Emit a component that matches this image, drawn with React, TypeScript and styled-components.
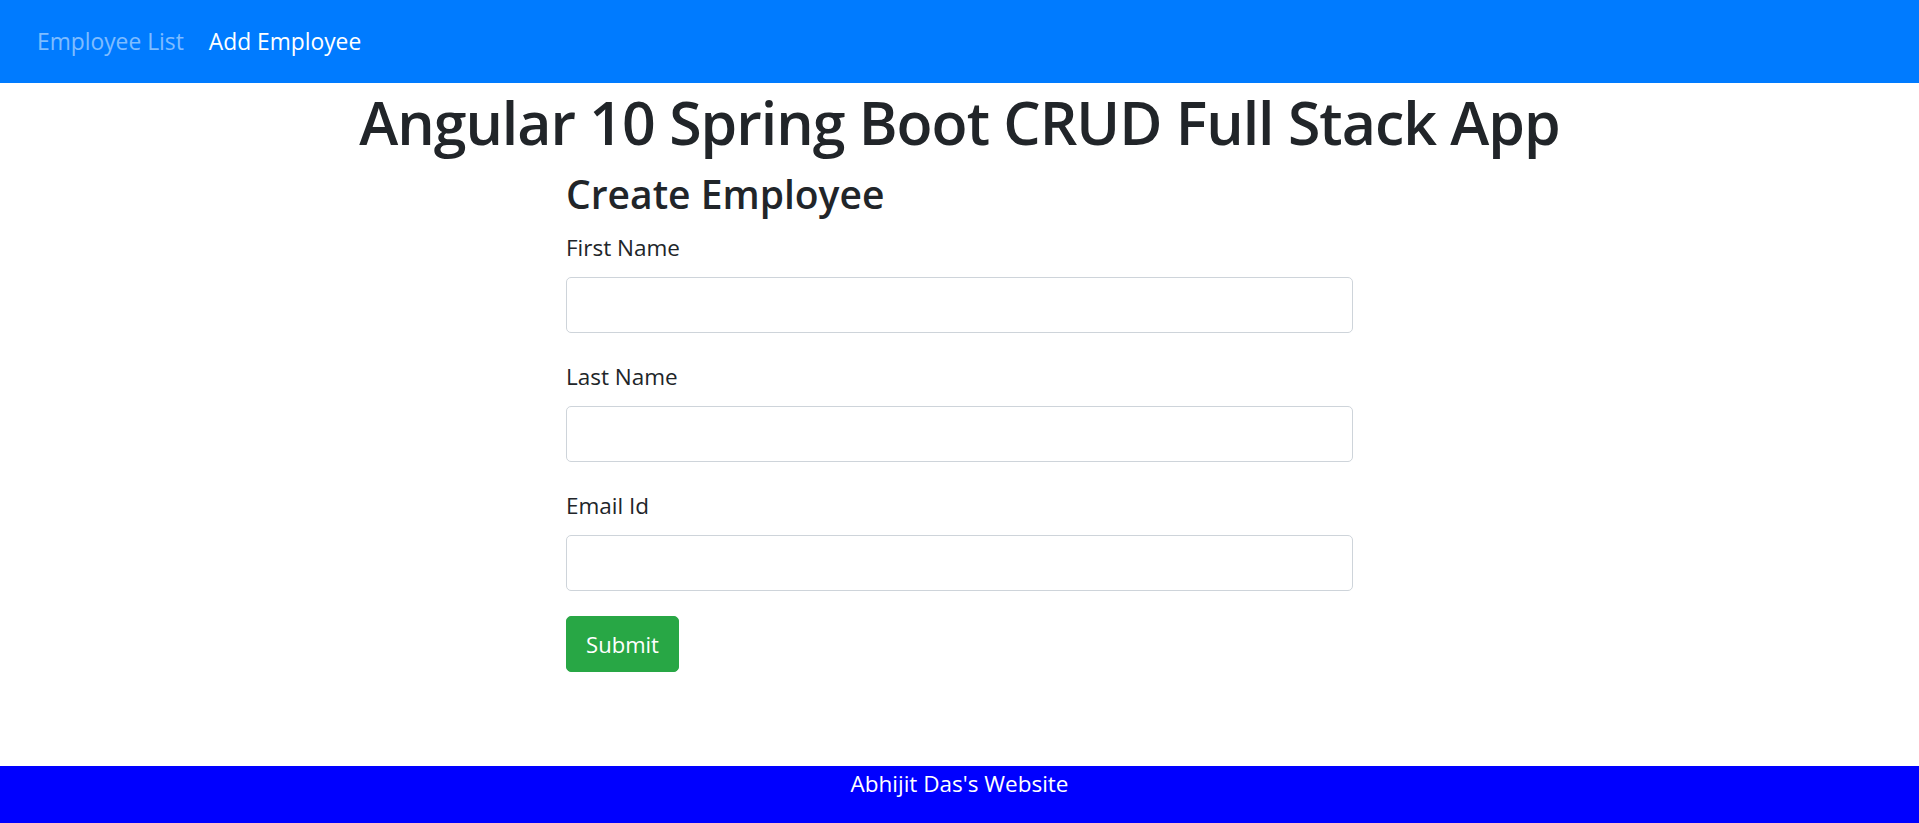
import React from "react";
import styled, { createGlobalStyle } from "styled-components";

const GlobalStyle = createGlobalStyle`
  html, body {
    margin: 0;
    padding: 0;
    background: #ffffff;
  }
  body {
    font-family: "Open Sans", "Noto Sans", "Liberation Sans", sans-serif;
    color: #212529;
  }
  * { box-sizing: border-box; }
`;

const Page = styled.div`
  min-height: 100vh;
  display: flex;
  flex-direction: column;
`;

const NavBar = styled.nav`
  height: 83px;
  background: #007bff;
  display: flex;
  align-items: center;
  padding-left: 37px;
  gap: 25px;
`;

const NavLink = styled.a<{ $active?: boolean }>`
  font-size: 22.8px;
  line-height: 34px;
  padding-top: 1px;
  text-decoration: none;
  color: ${(p) => (p.$active ? "#ffffff" : "rgba(255,255,255,0.5)")};
  cursor: pointer;
`;

const Title = styled.h1`
  margin: 1px 0 0;
  font-size: 59px;
  line-height: 76px;
  font-weight: 600;
  letter-spacing: -1px;
  text-align: center;
  color: #212529;
`;

const Main = styled.main`
  width: 787px;
  margin: 0 auto;
  display: flex;
  flex-direction: column;
`;

const SubTitle = styled.h2`
  margin: 10px 0 0;
  font-size: 39px;
  line-height: 47px;
  font-weight: 600;
  color: #212529;
`;

const Form = styled.form`
  display: flex;
  flex-direction: column;
  margin-top: 14px;
`;

const Group = styled.div`
  display: flex;
  flex-direction: column;
  gap: 12px;
  margin-bottom: 27px;
`;

const Label = styled.label`
  font-size: 22.5px;
  line-height: 34px;
  color: #212529;
`;

const Input = styled.input`
  height: 56px;
  width: 100%;
  border: 1px solid #ced4da;
  border-radius: 5px;
  background: #fff;
  font-size: 22px;
  padding: 0 15px;
  font-family: inherit;
  outline: none;
`;

const SubmitButton = styled.button`
  align-self: flex-start;
  margin-top: -2px;
  width: 113px;
  height: 56px;
  background: #28a745;
  border: 1px solid #28a745;
  border-radius: 5px;
  color: #ffffff;
  font-family: inherit;
  font-size: 22px;
  line-height: 34px;
  padding: 0;
  cursor: pointer;
`;

const Footer = styled.footer`
  margin-top: auto;
  height: 57px;
  background: #0000ff;
  color: #ffffff;
  text-align: center;
  font-size: 22.5px;
  line-height: 34px;
  padding-top: 1px;
`;

export default function App() {
  return (
    <Page>
      <GlobalStyle />
      <NavBar>
        <NavLink>Employee List</NavLink>
        <NavLink $active>Add Employee</NavLink>
      </NavBar>
      <Title>Angular 10 Spring Boot CRUD Full Stack App</Title>
      <Main>
        <SubTitle>Create Employee</SubTitle>
        <Form onSubmit={(e) => e.preventDefault()}>
          <Group>
            <Label htmlFor="firstName">First Name</Label>
            <Input id="firstName" type="text" />
          </Group>
          <Group>
            <Label htmlFor="lastName">Last Name</Label>
            <Input id="lastName" type="text" />
          </Group>
          <Group>
            <Label htmlFor="emailId">Email Id</Label>
            <Input id="emailId" type="text" />
          </Group>
          <SubmitButton type="submit">Submit</SubmitButton>
        </Form>
      </Main>
      <Footer>Abhijit Das's Website</Footer>
    </Page>
  );
}
